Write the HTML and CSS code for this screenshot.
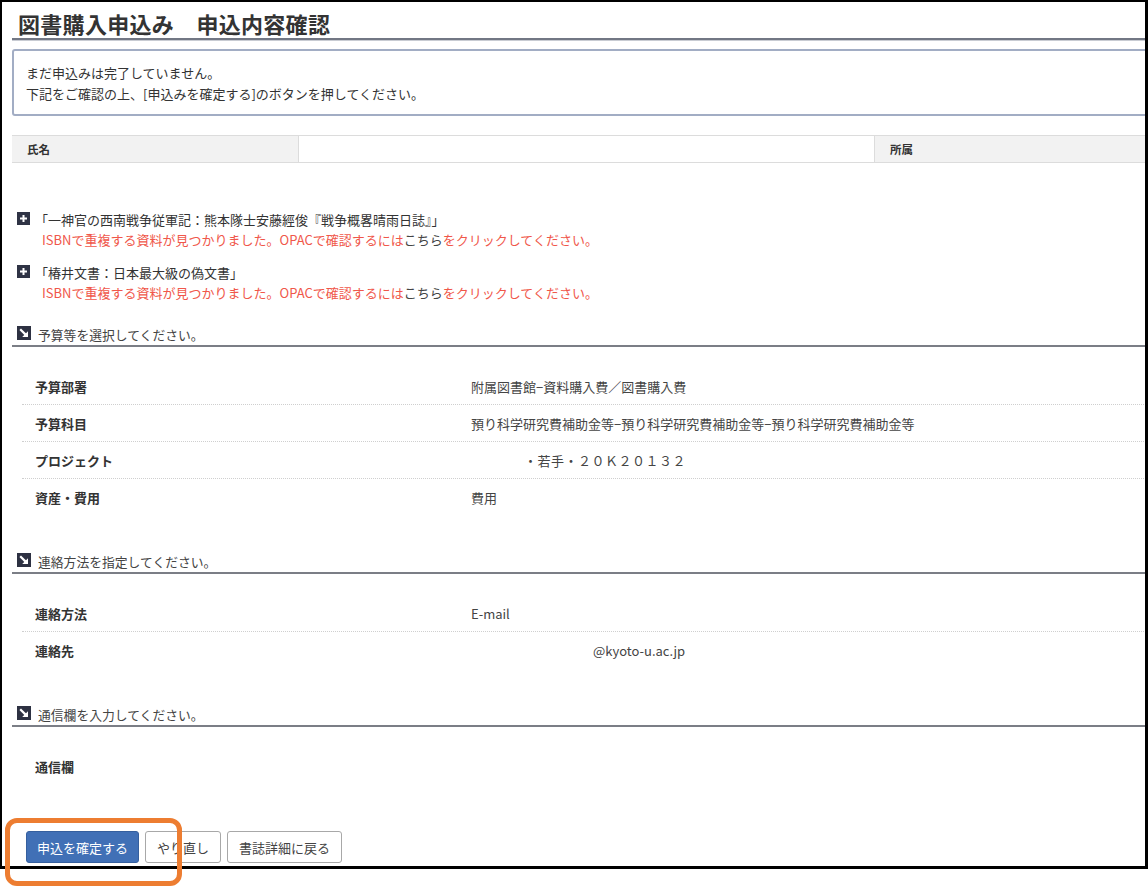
FILE: index.html
```
<!DOCTYPE html>
<html lang="ja">
<head>
<meta charset="utf-8">
<title>図書購入申込み 申込内容確認</title>
<link rel="stylesheet" href="styles.css">
</head>
<body>
<div class="frame">
  <div class="page">
    <h1 class="title">図書購入申込み　申込内容確認</h1>

    <div class="notice">
      <p>まだ申込みは完了していません。</p>
      <p>下記をご確認の上、[申込みを確定する]のボタンを押してください。</p>
    </div>

    <div class="user-table">
      <div class="cell label name-label">氏名</div>
      <div class="cell value name-value"></div>
      <div class="cell label org-label">所属</div>
    </div>

    <div class="items">
      <div class="item">
        <div class="item-title">
          <svg class="icon" width="13" height="13" viewBox="0 0 13 13"><rect width="13" height="13" fill="#2f3345"/><path d="M6.5 3v7M3 6.5h7" stroke="#fff" stroke-width="2"/></svg>
          <span>「一神官の西南戦争従軍記：熊本隊士安藤經俊『戦争概畧晴雨日誌』」</span>
        </div>
        <div class="warn">ISBNで重複する資料が見つかりました。OPACで確認するには<span class="link">こちら</span>をクリックしてください。</div>
      </div>
      <div class="item">
        <div class="item-title">
          <svg class="icon" width="13" height="13" viewBox="0 0 13 13"><rect width="13" height="13" fill="#2f3345"/><path d="M6.5 3v7M3 6.5h7" stroke="#fff" stroke-width="2"/></svg>
          <span>「椿井文書：日本最大級の偽文書」</span>
        </div>
        <div class="warn">ISBNで重複する資料が見つかりました。OPACで確認するには<span class="link">こちら</span>をクリックしてください。</div>
      </div>
    </div>

    <div class="section first">
      <div class="section-head">
        <svg class="icon" width="14" height="14" viewBox="0 0 14 14"><rect width="14" height="14" fill="#2d3142"/><path d="M3.2 3.2L8.6 8.6" stroke="#fff" stroke-width="2.2"/><path d="M11 5.2V11H5.2Z" fill="#fff"/></svg>
        <span>予算等を選択してください。</span>
      </div>
      <div class="rows">
        <div class="row"><div class="row-label">予算部署</div><div class="row-value">附属図書館−資料購入費／図書購入費</div></div>
        <div class="row"><div class="row-label">予算科目</div><div class="row-value">預り科学研究費補助金等−預り科学研究費補助金等−預り科学研究費補助金等</div></div>
        <div class="row"><div class="row-label">プロジェクト</div><div class="row-value"><span class="redact-project">・若手・２０Ｋ２０１３２</span></div></div>
        <div class="row"><div class="row-label">資産・費用</div><div class="row-value">費用</div></div>
      </div>
    </div>

    <div class="section">
      <div class="section-head">
        <svg class="icon" width="14" height="14" viewBox="0 0 14 14"><rect width="14" height="14" fill="#2d3142"/><path d="M3.2 3.2L8.6 8.6" stroke="#fff" stroke-width="2.2"/><path d="M11 5.2V11H5.2Z" fill="#fff"/></svg>
        <span>連絡方法を指定してください。</span>
      </div>
      <div class="rows">
        <div class="row"><div class="row-label">連絡方法</div><div class="row-value">E-mail</div></div>
        <div class="row"><div class="row-label">連絡先</div><div class="row-value"><span class="redact-mail">@kyoto-u.ac.jp</span></div></div>
      </div>
    </div>

    <div class="section">
      <div class="section-head">
        <svg class="icon" width="14" height="14" viewBox="0 0 14 14"><rect width="14" height="14" fill="#2d3142"/><path d="M3.2 3.2L8.6 8.6" stroke="#fff" stroke-width="2.2"/><path d="M11 5.2V11H5.2Z" fill="#fff"/></svg>
        <span>通信欄を入力してください。</span>
      </div>
      <div class="rows">
        <div class="row"><div class="row-label">通信欄</div><div class="row-value"></div></div>
      </div>
    </div>

    <div class="buttons">
      <button class="btn primary">申込を確定する</button>
      <button class="btn">やり直し</button>
      <button class="btn">書誌詳細に戻る</button>
    </div>
  </div>
</div>
<div class="highlight"></div>
</body>
</html>
```
FILE: styles.css
```
html, body {
  margin: 0;
  padding: 0;
  background: #fff;
}
body {
  position: relative;
  width: 1148px;
  height: 888px;
  overflow: hidden;
  font-family: "Noto Sans CJK JP", "Noto Sans", sans-serif;
  color: #333;
}
.frame {
  box-sizing: border-box;
  width: 1148px;
  height: 869px;
  border: 2px solid #000;
  border-right-width: 3px;
  border-bottom-width: 3px;
  overflow: hidden;
}
.page {
  width: 1160px;
  padding-left: 10px;
}
.title {
  margin: 0;
  padding: 6px 0 0 6px;
  height: 30px;
  line-height: 30px;
  font-size: 22px;
  letter-spacing: 0.3px;
  font-weight: 700;
  color: #333;
  border-bottom: 2px solid #727784;
  box-shadow: 0 1px 0 #c9ccd3;
}
.notice {
  margin-top: 9px;
  height: 63px;
  box-sizing: content-box;
  border: 2px solid #a2adc4;
  border-radius: 3px;
  padding: 0 0 0 12px;
  font-size: 13px;
  line-height: 21px;
}
.notice p {
  margin: 0;
}
.notice p:first-child {
  margin-top: 11px;
}
.user-table {
  margin-top: 19px;
  display: flex;
  height: 26px;
  border-top: 1px solid #dcdcdc;
  border-bottom: 1px solid #dcdcdc;
}
.cell {
  box-sizing: border-box;
  height: 26px;
  line-height: 26px;
  font-size: 11.5px;
  font-weight: 700;
  padding-left: 15px;
}
.cell.label {
  background: #f2f2f2;
}
.name-label {
  width: 287px;
  border-right: 1px solid #dcdcdc;
}
.name-value {
  width: 576px;
  border-right: 1px solid #dcdcdc;
}
.org-label {
  flex: 1;
}
.items {
  margin-top: 47px;
  font-size: 13px;
  line-height: 20px;
}
.item + .item {
  margin-top: 13px;
}
.item-title {
  display: flex;
  align-items: center;
  padding-left: 5px;
}
.item-title .icon {
  margin-right: 5px;
  margin-top: -3px;
}
.warn {
  padding-left: 30px;
  color: #f0574a;
}
.link {
  color: #444;
}
.section.first {
  margin-top: 21px;
}
.section {
  margin-top: 35px;
}
.section-head {
  display: flex;
  align-items: center;
  padding-left: 5px;
  height: 20px;
  padding-bottom: 1px;
  border-bottom: 2px solid #7b7e86;
  font-size: 12.8px;
  color: #444;
}
.section-head .icon {
  margin-right: 7px;
  margin-top: -2px;
}
.rows {
  margin: 21px 0 0 10px;
}
.row {
  display: flex;
  align-items: center;
  height: 37px;
  box-sizing: border-box;
  font-size: 13px;
  border-bottom: 1px dotted #cfcfcf;
}
.row:last-child {
  border-bottom: none;
}
.row-label {
  width: 449px;
  box-sizing: border-box;
  padding-left: 13px;
  font-weight: 700;
  color: #333;
}
.row-value {
  color: #444;
}
.redact-project {
  margin-left: 53px;
  letter-spacing: 0.5px;
}
.redact-mail {
  margin-left: 122px;
}
.buttons {
  display: flex;
  gap: 6px;
  margin-top: 46px;
  padding-left: 14px;
}
.btn {
  box-sizing: border-box;
  height: 32px;
  padding: 0 11px;
  white-space: nowrap;
  font-family: "Noto Sans CJK JP", "Noto Sans", sans-serif;
  font-size: 13px;
  color: #444;
  background: #fff;
  border: 1px solid #a8a8a8;
  border-radius: 3px;
}
.btn.primary {
  width: 113px;
  padding: 0;
  color: #fff;
  background: #4170b6;
  border-color: #355f9e;
}
.highlight {
  position: absolute;
  left: 5px;
  top: 818px;
  width: 177px;
  height: 68px;
  box-sizing: border-box;
  border: 5px solid #ed7d31;
  border-radius: 12px;
}
```
